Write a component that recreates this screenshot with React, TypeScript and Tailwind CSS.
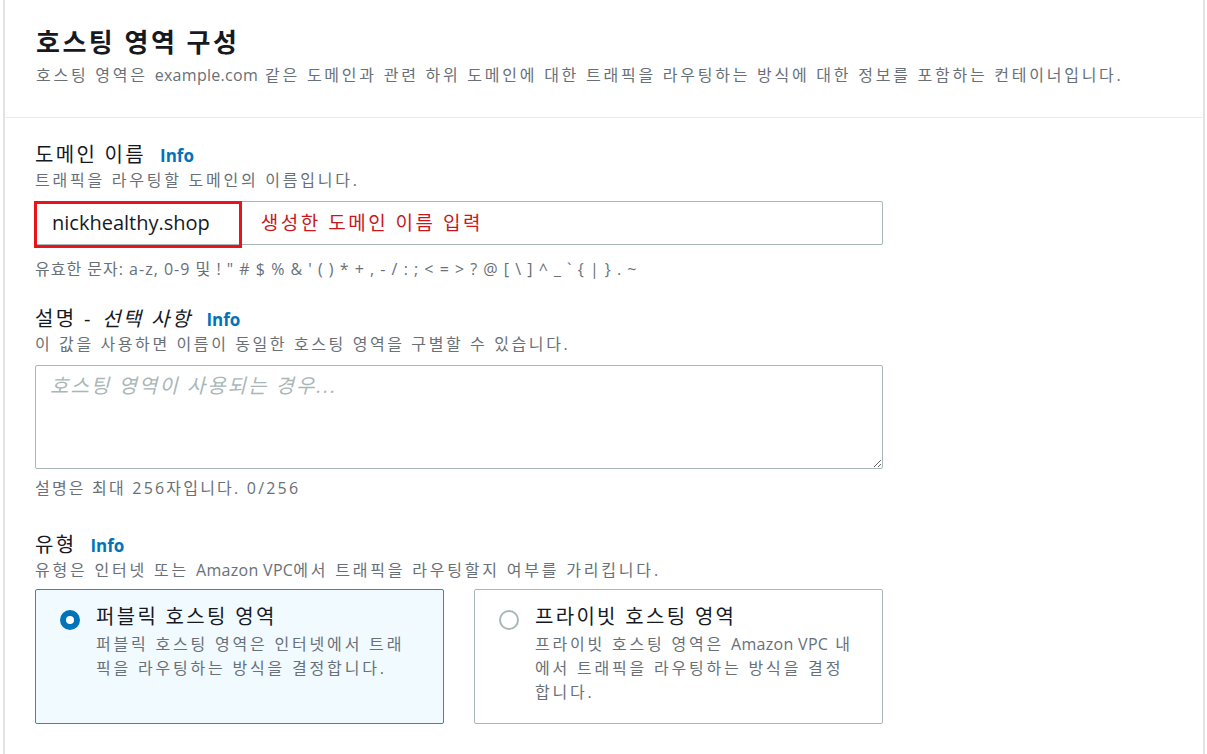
import React from "react";

function Info() {
  return <span className="ml-[14px] text-[17px] font-bold tracking-normal text-[#0073bb]">Info</span>;
}

function Lat({ children }: { children: React.ReactNode }) {
  return <span className="tracking-[0.3px]">{children}</span>;
}

function RadioCard({
  selected,
  title,
  children,
}: {
  selected: boolean;
  title: string;
  children: React.ReactNode;
}) {
  return (
    <div
      className={
        selected
          ? "flex h-[135px] w-[409px] gap-[16px] rounded-[2px] border border-[#00a1c9] bg-[#f1faff] pl-[24px] pt-[12px]"
          : "flex h-[135px] w-[409px] gap-[16px] rounded-[2px] border border-[#aab7b8] bg-white pl-[24px] pt-[12px]"
      }
    >
      {selected ? (
        <span className="mt-[8px] block h-[20px] w-[20px] shrink-0 rounded-full border-[6px] border-[#0073bb] bg-white" />
      ) : (
        <span className="mt-[8px] block h-[20px] w-[20px] shrink-0 rounded-full border-2 border-[#aab7b8] bg-white" />
      )}
      <div className="pr-[28px]">
        <div className="h-[30px] text-[20px] leading-[30px] tracking-[2.3px] text-[#16191f]">{title}</div>
        <div className="text-[16px] leading-[24px] tracking-[2.8px] text-[#687078]">{children}</div>
      </div>
    </div>
  );
}

export default function App() {
  return (
    <div className="h-[754px] w-full overflow-hidden bg-white pl-[3px] pr-[2px] font-['Open_Sans','Noto_Sans_CJK_KR',sans-serif]">
      <div className="h-full border-x-2 border-[#dfe3e6]">
        <div className="h-[118px] border-b border-[#eaeded] pl-[31px] pt-[23px]">
          <h1 className="text-[26px] font-bold leading-[38px] tracking-[2.5px] text-[#16191f]">호스팅 영역 구성</h1>
          <p className="mt-[2px] text-[16px] leading-[24px] tracking-[2.75px] text-[#687078]">
            호스팅 영역은 <Lat>example.com</Lat> 같은 도메인과 관련 하위 도메인에 대한 트래픽을 라우팅하는 방식에 대한 정보를 포함하는 컨테이너입니다.
          </p>
        </div>

        <div className="pl-[30px] pt-[23px]">
          {/* 도메인 이름 */}
          <div className="h-[28px] text-[20px] leading-[28px] tracking-[2.3px] text-[#16191f]">
            도메인 이름
            <Info />
          </div>
          <p className="h-[22px] text-[16px] leading-[22px] tracking-[2.75px] text-[#687078]">트래픽을 라우팅할 도메인의 이름입니다.</p>
          <div className="relative mt-[10px] flex h-[44px] w-[848px] items-center rounded-[2px] border border-[#aab7b8]">
            <div className="absolute -left-[2px] -top-[1px] h-[47px] w-[208px] border-[3px] border-[#e8131b]" />
            <span className="pl-[16px] text-[20px] text-[#16191f]">nickhealthy.shop</span>
            <span className="ml-[51px] text-[19px] tracking-[2.5px] text-[#c8181e]">생성한 도메인 이름 입력</span>
          </div>
          <p className="mt-[13px] h-[22px] text-[16px] leading-[22px] tracking-[1px] text-[#687078]">
            유효한 문자: a-z, 0-9 및 ! " # $ % &amp; ' ( ) * + , - / : ; &lt; = &gt; ? @ [ \ ] ^ _ ` {"{"} | {"}"} . ~
          </p>

          {/* 설명 */}
          <div className="mt-[25px] h-[28px] text-[20px] leading-[28px] tracking-[2.3px] text-[#16191f]">
            설명 - <i className="ml-[2px]">선택 사항</i>
            <Info />
          </div>
          <p className="h-[22px] text-[16px] leading-[22px] tracking-[2.6px] text-[#687078]">이 값을 사용하면 이름이 동일한 호스팅 영역을 구별할 수 있습니다.</p>
          <textarea
            className="mt-[10px] block h-[104px] w-[848px] rounded-[2px] border border-[#aab7b8] px-[14px] py-[5px] text-[20px] italic tracking-[2px] placeholder:text-[#aab7b8]"
            placeholder="호스팅 영역이 사용되는 경우..."
          />
          <p className="mt-[8px] h-[22px] text-[16px] leading-[22px] tracking-[2.2px] text-[#687078]">설명은 최대 256자입니다. 0/256</p>

          {/* 유형 */}
          <div className="mt-[32px] h-[28px] text-[20px] leading-[28px] tracking-[2.3px] text-[#16191f]">
            유형
            <Info />
          </div>
          <p className="h-[22px] text-[16px] leading-[22px] tracking-[2.8px] text-[#687078]">
            유형은 인터넷 또는 <Lat>Amazon VPC</Lat>에서 트래픽을 라우팅할지 여부를 가리킵니다.
          </p>
          <div className="mt-[8px] flex gap-[30px]">
            <RadioCard selected title="퍼블릭 호스팅 영역">
              퍼블릭 호스팅 영역은 인터넷에서 트래픽을 라우팅하는 방식을 결정합니다.
            </RadioCard>
            <RadioCard selected={false} title="프라이빗 호스팅 영역">
              프라이빗 호스팅 영역은 <Lat>Amazon VPC</Lat> 내에서 트래픽을 라우팅하는 방식을 결정합니다.
            </RadioCard>
          </div>
        </div>
      </div>
    </div>
  );
}
